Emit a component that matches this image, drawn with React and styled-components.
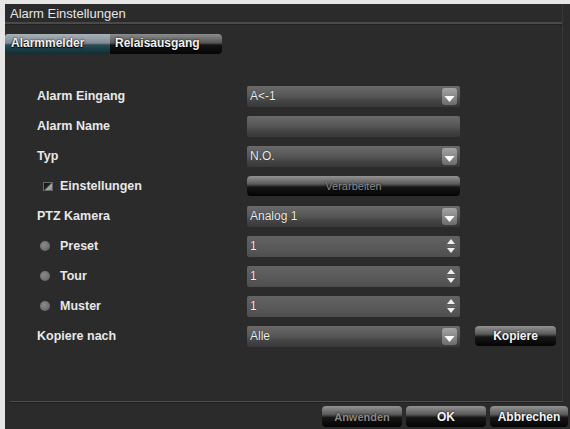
import React from 'react'
import styled, { createGlobalStyle } from 'styled-components'

const GlobalStyle = createGlobalStyle`
  html, body {
    margin: 0;
    padding: 0;
    background: #e4e4e4;
  }
  * { box-sizing: border-box; }
`

const Frame = styled.div`
  width: 570px;
  height: 429px;
  border-top: 4px solid #e6e6e6;
  border-left: 5px solid #e6e6e6;
  background: #2b2b2b;
  font-family: 'Liberation Sans', Arial, sans-serif;
  display: flex;
  flex-direction: column;
  overflow: hidden;
`

const Main = styled.div`
  width: 558px;
  flex: 1;
  display: flex;
  flex-direction: column;
  border-right: 1px solid #383838;
`

const TitleBar = styled.div`
  height: 20px;
  line-height: 20px;
  padding-left: 5px;
  font-size: 13px;
  color: #e6e6e6;
  border-bottom: 2px solid #4a4a4a;
  box-shadow: 0 1px 0 #222;
`

const TabBar = styled.div`
  display: flex;
  margin-top: 10px;
  height: 20px;
`

const Tab = styled.div`
  width: ${p => p.$w}px;
  height: 20px;
  line-height: 19px;
  padding-left: ${p => p.$pad}px;
  font-size: 12px;
  font-weight: bold;
  color: #f2f2f2;
  text-shadow: 0 0 2px #000, 0 1px 1px #000;
  border-radius: ${p => (p.$active ? '3px 0 0 0' : '0 4px 4px 0')};
  background: ${p =>
    p.$active
      ? 'linear-gradient(#a9b1b8 0%, #7f8c96 45%, #2c4a53 55%, #0b3038 100%)'
      : 'linear-gradient(#8c8c8c 0%, #555 45%, #141414 55%, #040404 100%)'};
`

const Form = styled.div`
  padding: 27px 0 0 32px;
  display: flex;
  flex-direction: column;
`

const Row = styled.div`
  height: 30px;
  display: flex;
  align-items: center;
`

const Label = styled.div`
  width: 210px;
  display: flex;
  align-items: center;
  font-size: 12.5px;
  font-weight: bold;
  color: #e8e8e8;
  padding-left: ${p => (p.$sub ? '3px' : '0')};
`

const Check = styled.span`
  width: 10px;
  height: 9px;
  margin: 0 7px 0 3px;
  background: linear-gradient(135deg, #111 0%, #222 45%, #aaa 60%, #888 100%);
  border: 1px solid #666;
`

const Dot = styled.span`
  width: 10px;
  height: 10px;
  border-radius: 50%;
  margin-right: 10px;
  background: radial-gradient(circle at 40% 40%, #8a8a8a, #5e5e5e);
`

const Field = styled.div`
  width: 213px;
  height: 21px;
  border-radius: 2px;
  display: flex;
  align-items: center;
  justify-content: space-between;
  padding: 0 3px 0 3px;
  font-size: 12px;
  color: #f0f0f0;
  text-shadow: 0 0 1px #000;
  background: ${p =>
    p.$kind === 'spin'
      ? 'linear-gradient(#636363, #585858 60%, #4e4e4e)'
      : 'linear-gradient(#6a6a6a 0%, #555 50%, #424242 75%, #383838 100%)'};
`

const Action = styled.div`
  width: ${p => p.$w}px;
  height: ${p => p.$h || 21}px;
  border-radius: 4px;
  display: flex;
  align-items: center;
  justify-content: center;
  font-size: ${p => (p.$dim ? '11px' : '12px')};
  font-weight: ${p => (p.$light ? 'normal' : 'bold')};
  color: ${p => (p.$dim ? '#8a8a8a' : '#f4f4f4')};
  text-shadow: 0 0 2px #000;
  background: linear-gradient(#929292 0%, #5a5a5a 40%, #171717 55%, #030303 100%);
`

const Kopiere = styled(Action)`
  margin-left: 15px;
`

const Footer = styled.div`
  display: flex;
  flex-direction: column;
`

const FooterLine = styled.div`
  width: 553px;
  margin-left: 5px;
  height: 2px;
  background: #4d4d4d;
  border-bottom: 1px solid #202020;
`

const ButtonRow = styled.div`
  display: flex;
  justify-content: flex-end;
  gap: 4px;
  padding: 3px 2px 2px 0;
`

const DropArrow = () => (
  <svg width="15" height="17" viewBox="0 0 15 17">
    <defs>
      <linearGradient id="ab" x1="0" y1="0" x2="0" y2="1">
        <stop offset="0" stopColor="#a4a4a4" />
        <stop offset="1" stopColor="#6c6c6c" />
      </linearGradient>
    </defs>
    <rect x="0" y="0" width="15" height="17" rx="3" fill="url(#ab)" />
    <polygon points="2.5,8 12.5,8 7.5,14" fill="#fff" />
  </svg>
)

const SpinArrows = () => (
  <svg width="12" height="18" viewBox="0 0 12 18">
    <polygon points="2,7 10,7 6,2" fill="#eee" />
    <line x1="1" y1="9" x2="11" y2="9" stroke="#777" strokeWidth="1" />
    <polygon points="2,11 10,11 6,16" fill="#eee" />
  </svg>
)

const rows = [
  { label: 'Alarm Eingang', kind: 'drop', value: 'A<-1' },
  { label: 'Alarm Name', kind: 'text', value: '' },
  { label: 'Typ', kind: 'drop', value: 'N.O.' },
  { label: 'Einstellungen', mark: 'check', kind: 'button', value: 'Verarbeiten' },
  { label: 'PTZ Kamera', kind: 'drop', value: 'Analog 1' },
  { label: 'Preset', mark: 'dot', kind: 'spin', value: '1' },
  { label: 'Tour', mark: 'dot', kind: 'spin', value: '1' },
  { label: 'Muster', mark: 'dot', kind: 'spin', value: '1' },
  { label: 'Kopiere nach', kind: 'drop', value: 'Alle', copy: true },
]

const Control = ({ kind, value }) => {
  if (kind === 'button') {
    return (
      <Action $w={213} $h={20} $dim $light>
        {value}
      </Action>
    )
  }
  return (
    <Field $kind={kind}>
      <span>{value}</span>
      {kind === 'drop' && <DropArrow />}
      {kind === 'spin' && <SpinArrows />}
    </Field>
  )
}

export default function App() {
  return (
    <>
      <GlobalStyle />
      <Frame>
        <Main>
          <TitleBar>Alarm Einstellungen</TitleBar>
          <TabBar>
            <Tab $active $w={105} $pad={6}>Alarmmelder</Tab>
            <Tab $w={112} $pad={5}>Relaisausgang</Tab>
          </TabBar>
          <Form>
            {rows.map(r => (
              <Row key={r.label}>
                <Label $sub={!!r.mark}>
                  {r.mark === 'check' && <Check />}
                  {r.mark === 'dot' && <Dot />}
                  {r.label}
                </Label>
                <Control kind={r.kind} value={r.value} />
                {r.copy && <Kopiere $w={81} $h={20}>Kopiere</Kopiere>}
              </Row>
            ))}
          </Form>
        </Main>
        <Footer>
          <FooterLine />
          <ButtonRow>
            <Action $w={80} $dim>Anwenden</Action>
            <Action $w={80}>OK</Action>
            <Action $w={78}>Abbrechen</Action>
          </ButtonRow>
        </Footer>
      </Frame>
    </>
  )
}
